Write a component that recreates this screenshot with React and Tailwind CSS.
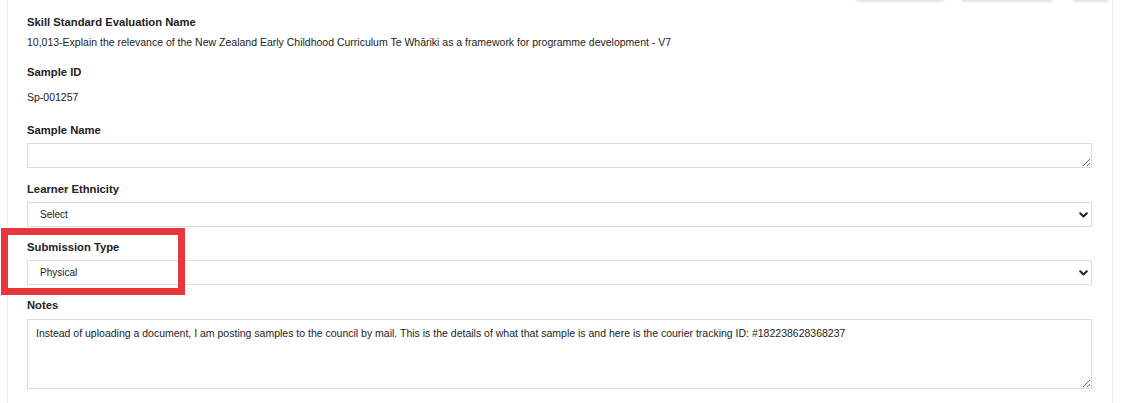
import { useState } from 'react';

const FONT = { fontFamily: '"Liberation Sans", Arial, sans-serif' };

function Label({ children, className = '' }) {
    return (
        <p className={`text-[11.25px] leading-4 font-bold text-[#222] ${className}`}>{children}</p>
    );
}

function Chevron() {
    return (
        <svg width="9" height="6" viewBox="0 0 9 6" className="absolute right-[4px] top-1/2 -translate-y-1/2 pointer-events-none">
            <path d="M1.2 1.2 L4.5 4.5 L7.8 1.2" fill="none" stroke="#222" strokeWidth="2" strokeLinecap="round" strokeLinejoin="round" />
        </svg>
    );
}

function SelectBox({ value, options, onChange }) {
    return (
        <div className="relative">
            <select value={value} onChange={(e) => onChange(e.target.value)}
                className="block w-full h-[25px] appearance-none bg-white border border-[#dcdcdc] pl-[12px] pr-6 text-[10px] text-[#222] outline-none">
                {options.map((o) => <option key={o} value={o}>{o}</option>)}
            </select>
            <Chevron />
        </div>
    );
}

export default function App() {
    const [ethnicity, setEthnicity] = useState('Select');
    const [submission, setSubmission] = useState('Physical');
    const [notes, setNotes] = useState(
        'Instead of uploading a document, I am posting samples to the council by mail. This is the details of what that sample is and here is the courier tracking ID: #182238628368237'
    );

    return (
        <div className="relative w-[1125px] h-[403px] bg-white overflow-hidden" style={FONT}>
            {/* Top action buttons, cut off by the crop */}
            <div className="flex h-0 pl-[856px]">
                <div className="w-[88px] h-[32px] -mt-[31px] bg-white border border-[#e6e6e6] rounded-[2px] shadow-[0_1px_2px_rgba(0,0,0,0.12)]" />
                <div className="w-[91px] h-[32px] -mt-[31px] ml-[18px] bg-white border border-[#e6e6e6] rounded-[2px] shadow-[0_1px_2px_rgba(0,0,0,0.12)]" />
                <div className="w-[36px] h-[32px] -mt-[31px] ml-[20px] bg-white border border-[#e6e6e6] rounded-[2px] shadow-[0_1px_2px_rgba(0,0,0,0.12)]" />
            </div>

            <div className="ml-[7px] w-[1106px] h-[403px] border-l border-r border-[#efefef] pl-[19px] pr-[20px] pt-[14px]">
                <Label>Skill Standard Evaluation Name</Label>
                <p className="mt-[4px] text-[10.5px] leading-4 text-[#222]">
                    10,013-Explain the relevance of the New Zealand Early Childhood Curriculum Te Whāriki as a framework for programme development - V7
                </p>

                <Label className="mt-[14px]">Sample ID</Label>
                <p className="mt-[9px] text-[10.5px] leading-4 text-[#222]">Sp-001257</p>

                <Label className="mt-[17px]">Sample Name</Label>
                <textarea className="block mt-[5px] w-full h-[25px] border border-[#dcdcdc] px-2 py-1 text-[10px] outline-none" />

                <Label className="mt-[13px]">Learner Ethnicity</Label>
                <div className="mt-[5px]">
                    <SelectBox value={ethnicity} onChange={setEthnicity}
                        options={['Select', 'Māori', 'Pacific', 'Asian', 'European', 'Other']} />
                </div>

                <Label className="mt-[12px]">Submission Type</Label>
                <div className="mt-[5px]">
                    <SelectBox value={submission} onChange={setSubmission}
                        options={['Physical', 'Digital']} />
                </div>

                <Label className="mt-[12px]">Notes</Label>
                <textarea value={notes} onChange={(e) => setNotes(e.target.value)}
                    className="block mt-[6px] w-full h-[70px] border border-[#dcdcdc] px-[8px] py-[7px] text-[10.5px] leading-[13px] text-[#222] outline-none" />
            </div>

            {/* Red highlight annotation */}
            <div className="absolute left-[1px] top-[228px] w-[184px] h-[67px] border-[7px] border-[#e8383d] pointer-events-none" />
        </div>
    );
}
